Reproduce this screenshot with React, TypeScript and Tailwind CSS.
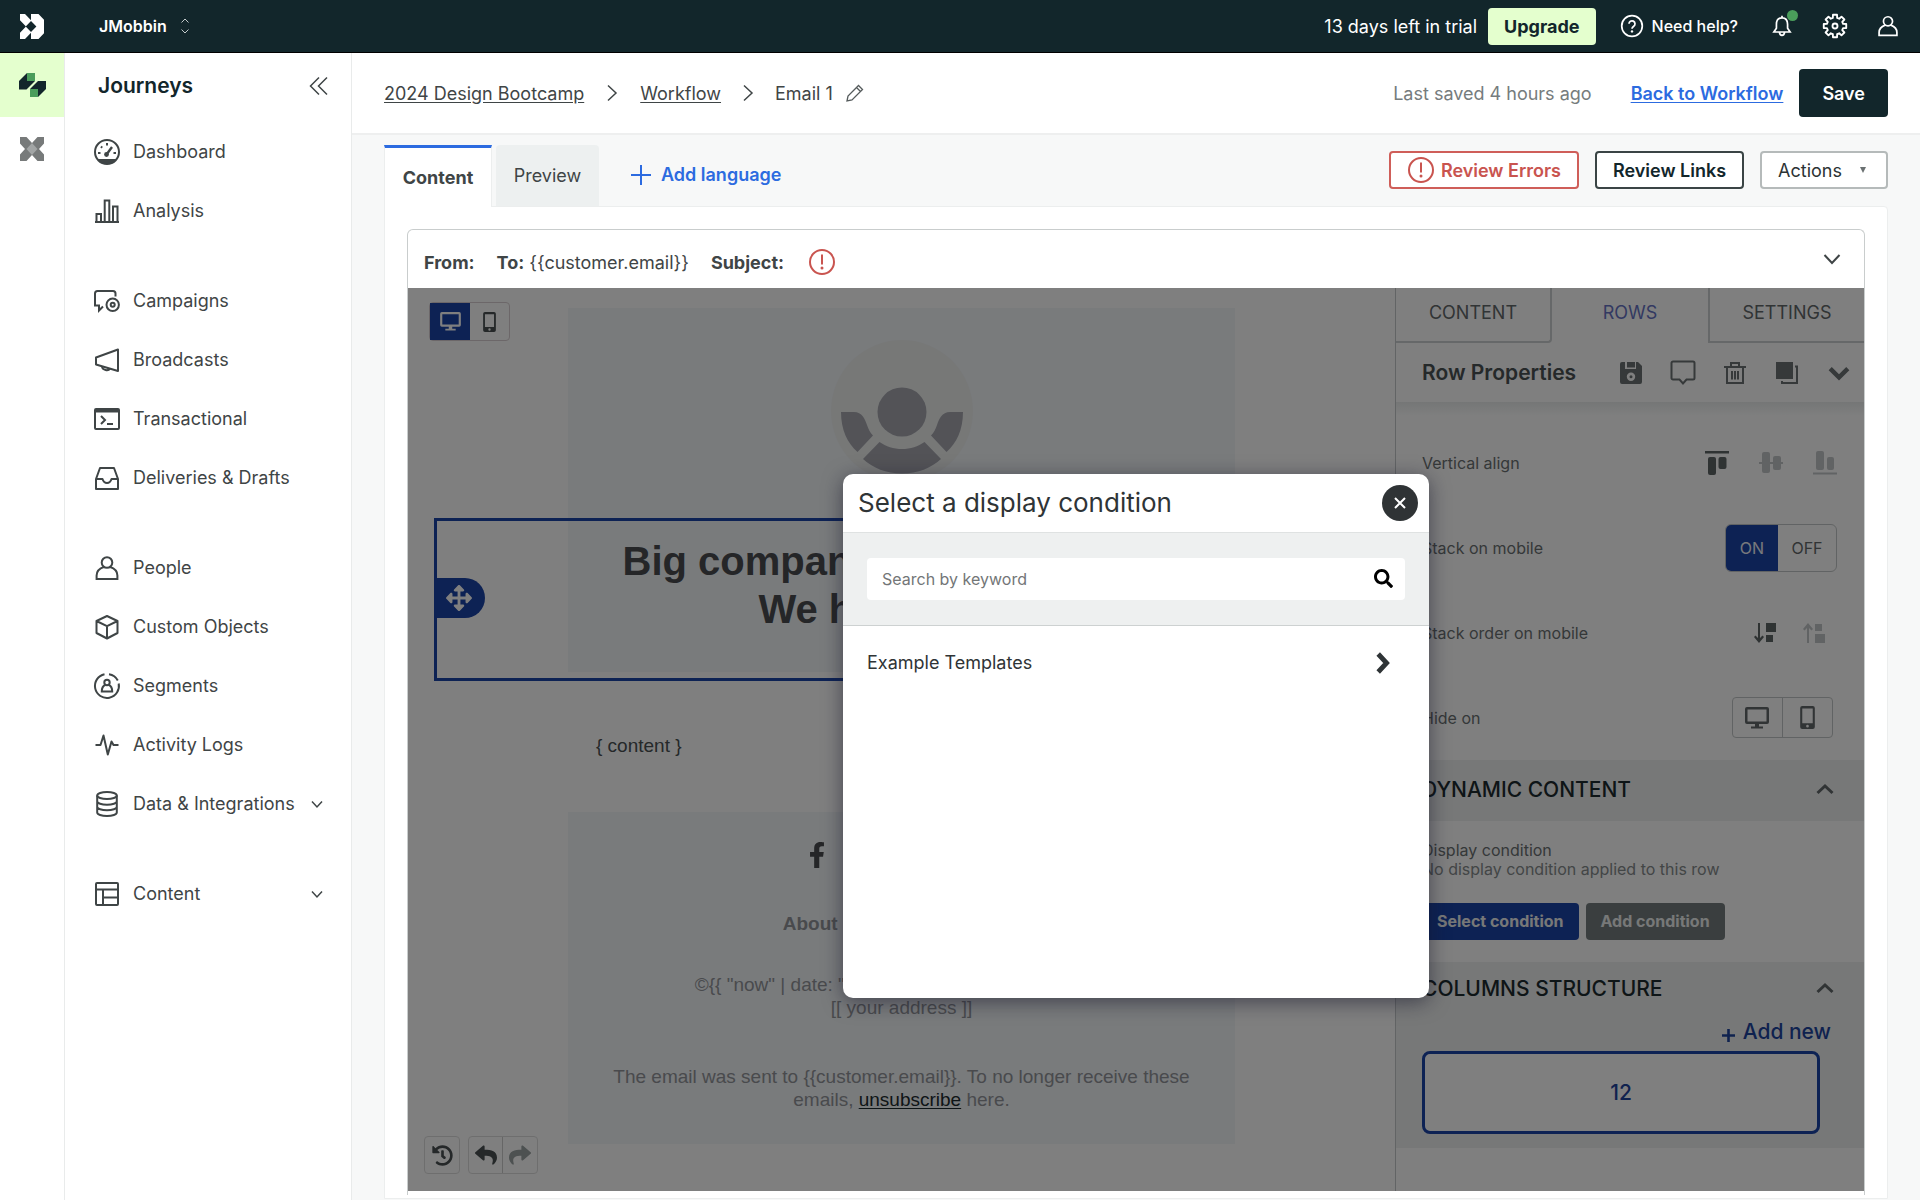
import React from "react";
import {
  FaArrowsAlt,
  FaFacebookF,
  FaHistory,
  FaReply,
  FaSearch,
  FaShare,
} from "react-icons/fa";

type IconProps = { children: React.ReactNode; className?: string };

// 28x28 outline icon shared by the navigation and the top bar
const Icon: React.FC<IconProps> = ({ children, className = "size-7" }) => (
  <svg
    viewBox="0 0 28 28"
    fill="none"
    stroke="currentColor"
    strokeWidth="2"
    className={`shrink-0 ${className}`}
    aria-hidden="true"
  >
    {children}
  </svg>
);

const personPath =
  "M14 3.2a5.3 5.3 0 1 1 0 10.6a5.3 5.3 0 0 1 0-10.6M10.6 13c-4 1.5-7 4.500-7 8.500v3.500h20.800v-3.500c0-4-3-7-7-8.500";

// eight teeth around the centre of the 28x28 box
const gearPoints = Array.from({ length: 8 })
  .flatMap((_, i) => {
    const a = (i * Math.PI) / 4;
    return [
      [9, a - 0.26],
      [12.3, a - 0.18],
      [12.3, a + 0.18],
      [9, a + 0.26],
    ];
  })
  .map(([r, a]) => `${(14 + r * Math.cos(a)).toFixed(2)},${(14 + r * Math.sin(a)).toFixed(2)}`)
  .join(" ");

const icons: Record<string, React.ReactNode> = {
  Dashboard: (
    <>
      <circle cx="14" cy="14" r="12" />
      <path d="M5 21.500h18l-3.500 3.500h-11z" fill="currentColor" strokeWidth="1" />
      <path d="M13.500 16.500L19 9" strokeWidth="2.400" />
      <circle cx="13.500" cy="16.500" r="2.400" fill="currentColor" stroke="none" />
      <path d="M14 5v2.500M8 8.500l1.200 1.200M5 15h2.500M20.500 15h2.500" />
    </>
  ),
  Analysis: (
    <>
      <path d="M2 25h24" />
      <path d="M3.500 25v-8h4.500v8M11.700 25v-21.500h4.600v21.500M20 25v-15.500h4.500v15.500" />
    </>
  ),
  Campaigns: (
    <>
      <path d="M22.500 9.500v-3a2.500 2.500 0 0 0-2.500-2.500h-15.500a2.500 2.500 0 0 0-2.500 2.500v12h4v5l4-4" />
      <circle cx="19.700" cy="17.800" r="6.200" />
      <circle cx="19.700" cy="17.800" r="2" />
    </>
  ),
  Broadcasts: (
    <>
      <path d="M25 3.500v21.500l-22-6.500v-7z" strokeLinejoin="round" />
      <path d="M9 20.500c.5 4 6.500 4.800 8 2" />
    </>
  ),
  Transactional: (
    <>
      <rect x="2" y="4" width="24" height="20" rx="1" />
      <path d="M2 6h24" strokeWidth="3" />
      <path d="M8 11l4 4-4 4M14 19h6" />
    </>
  ),
  "Deliveries & Drafts": (
    <path
      d="M3 15l4-11h14l4 11v10h-22zM3 15h6.500c.8 2.600 2.400 4 4.500 4s3.700-1.400 4.500-4h6.500"
      strokeLinejoin="round"
    />
  ),
  People: <path d={personPath} />,
  "Custom Objects": (
    <path
      d="M14 3l10.500 5v12l-10.500 5.500-10.500-5.500v-12zM3.500 8l10.500 5.200 10.500-5.200M14 13.200v12.300"
      strokeLinejoin="round"
    />
  ),
  Segments: (
    <>
      <path d="M11.500 2.200a12 12 0 1 0 14.200 9.300M16 2.200a12 12 0 0 1 8.800 6.300" />
      <circle cx="14" cy="10.500" r="2.700" />
      <path d="M12 13c-2 1-3.200 2.700-3.200 6.500h10.400c0-3.800-1.200-5.500-3.200-6.500" />
    </>
  ),
  "Activity Logs": (
    <path d="M2.500 14h5l3-9.500 4.300 19 3.700-13 2 3.500h5" strokeLinejoin="round" />
  ),
  "Data & Integrations": (
    <>
      <ellipse cx="14" cy="5.500" rx="9.800" ry="3.500" />
      <path d="M4.200 5.500v17c0 2 4.400 3.500 9.800 3.500s9.800-1.500 9.800-3.500v-17M4.200 11.200c0 2 4.400 3.500 9.800 3.500s9.800-1.500 9.800-3.500M4.200 16.800c0 2 4.400 3.500 9.800 3.500s9.800-1.500 9.800-3.500" />
    </>
  ),
  Content: (
    <>
      <rect x="3" y="3" width="22" height="22" rx="1" />
      <path d="M3 9.500h22M10 9.500v15.500M10 17.500h15" />
    </>
  ),
};

const navGroups = [
  ["Dashboard", "Analysis"],
  ["Campaigns", "Broadcasts", "Transactional", "Deliveries & Drafts"],
  ["People", "Custom Objects", "Segments", "Activity Logs", "Data & Integrations"],
  ["Content"],
];

const expandable = ["Data & Integrations", "Content"];

const Chevron: React.FC<{ className: string; d: string; width?: number }> = ({
  className,
  d,
  width = 2,
}) => (
  <svg
    viewBox="0 0 20 20"
    fill="none"
    stroke="currentColor"
    strokeWidth={width}
    className={`shrink-0 ${className}`}
    aria-hidden="true"
  >
    <path d={d} />
  </svg>
);

const ErrorIcon: React.FC<{ className?: string }> = ({ className = "" }) => (
  <Icon className={`size-7 text-[#c9544f] ${className}`}>
    <circle cx="14" cy="14" r="12" />
    <path d="M14 6.500v10" />
    <circle cx="14" cy="20" r="1.500" fill="currentColor" stroke="none" />
  </Icon>
);

const DesktopIcon: React.FC<{ className?: string }> = ({ className = "" }) => (
  <svg viewBox="0 0 24 22" fill="currentColor" className={className} aria-hidden="true">
    <path
      fillRule="evenodd"
      d="M2 0h20a2 2 0 0 1 2 2v13a2 2 0 0 1-2 2h-8v2.500h4v2h-12v-2h4v-2.500h-8a2 2 0 0 1-2-2v-13a2 2 0 0 1 2-2zM2.500 2.500v12h19v-12z"
    />
  </svg>
);

const MobileIcon: React.FC<{ className?: string }> = ({ className = "" }) => (
  <svg viewBox="0 0 14 22" fill="currentColor" className={className} aria-hidden="true">
    <path
      fillRule="evenodd"
      d="M2 0h10a2 2 0 0 1 2 2v18a2 2 0 0 1-2 2h-10a2 2 0 0 1-2-2v-18a2 2 0 0 1 2-2zM2 2.500v14h10v-14zM7 18a1.300 1.300 0 1 0 0 2.600a1.300 1.300 0 0 0 0-2.600z"
    />
  </svg>
);

const TopBar: React.FC = () => (
  <header className="flex h-[53px] items-center border-b border-black bg-[#12262b] text-white">
    <svg viewBox="0 0 24 25" className="ml-5 h-[25px] w-6" fill="#fff" aria-label="Home">
      <path d="M0 0h5l6 6.300v.8l-5.300 5.400 5.300 5.400v.8l-6 6.300h-5v-6.300l6-6.200-6-6.200z" />
      <path d="M11 0h7.500l5.500 5.800v13.400l-5.500 5.800h-7.500v-7.100l5.400-5.400-5.400-5.400z" />
    </svg>
    <button className="ml-[55px] flex items-center gap-[14px] text-[16px] font-semibold">
      JMobbin
      <svg viewBox="0 0 8 16" className="h-4 w-2" fill="none" stroke="#c4cbcc" aria-hidden="true">
        <path d="M.5 4.500L4 1l3.500 3.500M.5 11.500L4 15l3.500-3.500" />
      </svg>
    </button>
    <div className="ml-auto flex items-center pr-5">
      <span className="text-[18px]">13 days left in trial</span>
      <button className="ml-[11px] h-[37px] rounded bg-[#e4ffce] px-4 text-[18px] font-bold text-[#12262b]">
        Upgrade
      </button>
      <button className="ml-6 flex items-center gap-2 text-[16px] font-medium">
        <Icon className="size-6">
          <circle cx="14" cy="14" r="12" />
          <path d="M10.500 11.500a3.500 3.500 0 1 1 5.500 2.800c-1.300.9-2 1.500-2 2.900" />
          <circle cx="14" cy="20.300" r="1.400" fill="currentColor" stroke="none" />
        </Icon>
        Need help?
      </button>
      <button className="relative ml-8" aria-label="Notifications">
        <Icon className="size-6">
          <path d="M14 4.500c-4.500 0-6.500 3.300-6.500 7.500v4.500l-3 4.500h19l-3-4.500v-4.500c0-4.200-2-7.500-6.500-7.500zM14 2v2.500M11 21.500c.5 4.500 5.500 4.500 6 0" />
        </Icon>
        <span className="absolute -right-1 -top-1 size-[11px] rounded-full bg-[#4a9d5b]" />
      </button>
      <button className="ml-7" aria-label="Settings">
        <Icon className="size-[26px]">
          <polygon points={gearPoints} strokeLinejoin="round" />
          <circle cx="14" cy="14" r="2.700" />
        </Icon>
      </button>
      <button className="ml-7" aria-label="Account">
        <Icon className="size-6">
          <path d={personPath} />
        </Icon>
      </button>
    </div>
  </header>
);

const ProductRail: React.FC = () => (
  <aside className="w-[65px] shrink-0 border-r border-[#e9ebeb]">
    <a href="#journeys" aria-label="Journeys" className="flex h-16 items-center justify-center bg-[#e4ffce]">
      <svg viewBox="0 0 27 24" className="h-6 w-[27px]" aria-hidden="true">
        <path d="M8 0l-8 8v8.500h7.500l8.500-8.500v-8z" fill="#12262b" />
        <path d="M8 0h8v8h-8z" fill="#4a9d5b" />
        <path d="M19 8h8v8l-8 8h-8v-8z" fill="#12262b" />
        <path d="M11 16h8v8h-8z" fill="#4a9d5b" />
      </svg>
    </a>
    <a href="#pipelines" aria-label="Data Pipelines" className="flex h-16 items-center justify-center">
      <svg viewBox="0 0 24 24" className="size-6" aria-hidden="true">
        <path d="M0 0h6.500l5.500 6 5.500-6h6.500v6.500l-5 5.500 5 5.500v6.500h-6.500l-5.500-6-5.500 6h-6.500v-6.500l5-5.500-5-5.500z" fill="#777a7a" />
        <path d="M12 6l5.500 6-5.500 6-5.500-6z" fill="#a2a5a5" />
      </svg>
    </a>
  </aside>
);

const Sidebar: React.FC = () => (
  <nav className="w-[287px] shrink-0 border-r border-[#e9ebeb]">
    <div className="flex h-[69px] items-center justify-between pb-1 pl-[33px] pr-[22px]">
      <h2 className="text-[21px] font-semibold text-[#12262b]">Journeys</h2>
      <button aria-label="Collapse sidebar" className="text-[#3f4546]">
        <Chevron className="size-5" d="M10 1.500L1.500 10l8.500 8.500M18 1.500L9.500 10l8.500 8.500" width={1.5} />
      </button>
    </div>
    <div className="flex flex-col gap-[31px]">
      {navGroups.map((group) => (
        <ul key={group[0]}>
          {group.map((name) => (
            <li key={name}>
              <a href="#nav" className="flex h-[59px] items-center pl-7 pr-6 text-[18px] text-[#3f4546]">
                <Icon>{icons[name]}</Icon>
                <span className="ml-3">{name}</span>
                {expandable.includes(name) && (
                  <Chevron className="ml-auto size-5" d="M5 7.500l5 5.500 5-5.500" width={1.5} />
                )}
              </a>
            </li>
          ))}
        </ul>
      ))}
    </div>
  </nav>
);

const PageHeader: React.FC = () => (
  <div className="flex h-[82px] items-center border-b-2 border-[#eeefef] bg-white px-8 text-[18px] text-[#3f4546]">
    <a href="#campaign" className="underline underline-offset-2">
      2024 Design Bootcamp
    </a>
    <Chevron className="mx-[18px] size-5" d="M6 2.500l8 7.500-8 7.500" width={1.5} />
    <a href="#workflow" className="underline underline-offset-2">
      Workflow
    </a>
    <Chevron className="mx-[17px] size-5" d="M6 2.500l8 7.500-8 7.500" width={1.5} />
    <span>Email 1</span>
    <button aria-label="Rename" className="ml-3 text-[#555b5c]">
      <Chevron className="size-5" d="M2 18l1-5 10.500-10.500 4 4-10.500 10.500zM11.500 4.500l4 4" width={1.3} />
    </button>
    <span className="ml-auto text-[#767c7d]">Last saved 4 hours ago</span>
    <a href="#workflow" className="ml-[39px] font-semibold text-[#2c6be0] underline underline-offset-2">
      Back to Workflow
    </a>
    <button className="ml-4 h-12 rounded bg-[#12262b] px-[23px] font-semibold text-white">Save</button>
  </div>
);

const TabBar: React.FC = () => (
  <div className="flex h-[71px] items-end text-[18px]">
    <button className="relative z-10 -mb-px h-[62px] w-[108px] border-x border-t-[3px] border-x-[#eceeee] border-t-[#2c6be0] bg-white font-bold text-[#3f4546]">
      Content
    </button>
    <button className="ml-1 h-[61px] w-[103px] rounded-t bg-[#edf0f0] text-[#3f4546]">
      Preview
    </button>
    <button className="ml-8 flex h-[61px] items-center gap-[10px] pb-[2px] font-semibold text-[#2c6be0]">
      <Chevron className="size-5" d="M10 0v20M0 10h20" width={2} />
      Add language
    </button>
    <div className="ml-auto flex gap-4 pb-[17px]">
      <button className="flex h-[38px] items-center gap-[6px] rounded border-2 border-[#cf5e59] bg-white px-4 font-semibold text-[#c9544f]">
        <ErrorIcon />
        Review Errors
      </button>
      <button className="h-[38px] rounded border-2 border-[#3a4445] bg-white px-4 font-semibold text-[#12262b]">
        Review Links
      </button>
      <button
        aria-haspopup="menu"
        className="flex h-[38px] items-center gap-[14px] rounded border-2 border-[#b5baba] bg-white px-4 text-[#2c3334]"
      >
        Actions
        <svg viewBox="0 0 6 6" className="mx-1 size-[6px]" fill="#6a7071" aria-hidden="true">
          <path d="M0 0h6l-3 6z" />
        </svg>
      </button>
    </div>
  </div>
);

// the picture placeholder at the top of the email
const AvatarPlaceholder: React.FC = () => (
  <svg viewBox="0 0 146 146" className="mx-auto size-[146px]" aria-hidden="true">
    <circle cx="73" cy="73" r="71" fill="#eef0ef" />
    <g fill="#a6a7af">
      <circle cx="73" cy="74" r="24.500" />
      <path d="M12 74h13c8 0 11 7 13 13 1.500 4 3 7.500 6 10.500l-15.500 16.500c-10-9-16.500-22-16.500-40z" />
      <path d="M134 74h-13c-8 0-11 7-13 13-1.500 4-3 7.500-6 10.500l15.500 16.500c10-9 16.500-22 16.500-40z" />
      <path d="M50.500 104c6.500 4.500 14 7 22.500 7s16-2.500 22.500-7l16.500 17c-10 9-23 14.500-39 14.500s-29-5.500-39-14.500z" />
    </g>
  </svg>
);

const EmailCanvas: React.FC = () => (
  <section className="relative flex grow flex-col bg-white pb-[47px] pt-5 font-['Liberation_Sans',Arial,sans-serif]">
    <div className="mx-auto h-[210px] w-[667px] bg-[#f2f6f9] pt-[30px]">
      <AvatarPlaceholder />
    </div>
    <div className="relative mx-[26px]">
      <div className="mx-auto w-[667px] bg-[#f2f6f9] pb-[39px] pt-[19px]">
        <h1 className="text-center text-[40px] font-bold leading-[48px] text-[#4a4c50]">
          Big companies are confusing
          <br />
          We have ideas.
        </h1>
      </div>
      <div className="absolute inset-x-0 -bottom-[9px] top-0 flex items-center border-[3px] border-[#1b44a8] pb-1">
        <span className="flex h-10 w-12 items-center rounded-r-full bg-[#1b44a8] pl-[9px] text-white">
          <FaArrowsAlt size={26} />
        </span>
      </div>
    </div>
    <div className="mx-auto flex h-[140px] w-[667px] items-center pl-7 pt-2 text-[19px] text-[#4a5153]">
      {"{ content }"}
    </div>
    <div className="mx-auto w-[667px] grow bg-[#f2f6f9] text-center text-[19px] leading-[23px] text-[#92959a]">
      <div className="flex justify-center pl-[40px] pr-[210px] pt-[30px] text-[#4a4c50]">
        <FaFacebookF size={26} />
      </div>
      <p className="mt-[44px] font-bold">About | Contact us | Blogs</p>
      <p className="mt-[38px]">{'©{{ "now" | date: "%Y" }} [[ your company name ]]'}</p>
      <p>{"[[ your address ]]"}</p>
      <p className="mt-[46px]">
        {"The email was sent to {{customer.email}}. To no longer receive these"}
      </p>
      <p>
        emails,{" "}
        <a href="#unsubscribe" className="text-[#1c2b2f] underline underline-offset-2">
          unsubscribe
        </a>{" "}
        here.
      </p>
    </div>
    <div className="absolute left-[21px] top-[14px] flex rounded-sm border border-[#d8cfd2]">
      <button aria-label="Desktop view" className="flex h-[37px] w-10 items-center justify-center bg-[#1b44a8] text-white">
        <DesktopIcon className="h-[19px] w-[21px]" />
      </button>
      <button aria-label="Mobile view" className="flex h-[37px] w-[39px] items-center justify-center text-[#4a5153]">
        <MobileIcon className="h-5 w-[13px]" />
      </button>
    </div>
    <div className="absolute bottom-[17px] left-4 flex gap-2 text-[#4a5153]">
      <button aria-label="History" className="flex h-[38px] w-9 items-center justify-center rounded border border-[#ddd]">
        <FaHistory size={21} />
      </button>
      <div className="flex rounded border border-[#ddd]">
        <button aria-label="Undo" className="flex h-9 w-[34px] items-center justify-center border-r border-[#ccc]">
          <FaReply size={22} />
        </button>
        <button aria-label="Redo" className="flex h-9 w-[34px] items-center justify-center text-[#9aa2a2]">
          <FaShare size={22} />
        </button>
      </div>
    </div>
  </section>
);

const PanelRow: React.FC<{ label: string; children: React.ReactNode }> = ({ label, children }) => (
  <div className="flex h-[85px] items-center justify-between text-[16px] text-[#6b7172]">
    <span>{label}</span>
    {children}
  </div>
);

const PropertiesPanel: React.FC = () => (
  <section className="flex w-[469px] shrink-0 flex-col border-l border-[#c4c9ca] bg-white">
    <div className="grid grid-cols-3 text-[18px] text-[#62686a]">
      <button className="h-[55px] rounded-br border-b-2 border-r-2 border-[#cdd1d2] pb-1">CONTENT</button>
      <button className="h-[55px] pb-[6px] text-[#6673c4]">ROWS</button>
      <button className="h-[55px] border-b-2 border-l-2 border-[#cdd1d2] pb-1">SETTINGS</button>
    </div>
    <div className="flex h-[59px] items-center pl-[26px] pr-[14px] text-[#6d7374]">
      <h3 className="mr-auto text-[21px] font-semibold text-[#4b5254]">Row Properties</h3>
      <div className="flex items-center gap-[30px]">
        <svg viewBox="0 0 22 22" className="size-[22px]" fill="currentColor" aria-label="Save row">
          <path
            fillRule="evenodd"
            d="M2 0h3v7h11v-7h2l4 4v16a2 2 0 0 1-2 2h-18a2 2 0 0 1-2-2v-18a2 2 0 0 1 2-2zM11 10.500a4.200 4.200 0 1 0 0 8.400a4.200 4.200 0 0 0 0-8.400zM11 13.200a1.500 1.500 0 1 1 0 3a1.500 1.500 0 0 1 0-3z"
          />
          <path d="M7 0h8v5.500h-8z" />
        </svg>
        <svg viewBox="0 0 22 22" className="size-[22px] overflow-visible" fill="none" stroke="currentColor" strokeWidth="2" aria-label="Comment">
          <path d="M1-.5h20a1.500 1.500 0 0 1 1.500 1.500v15a1.500 1.500 0 0 1-1.500 1.500h-6.500l-3.500 4-3.500-4h-6.500a1.500 1.500 0 0 1-1.500-1.500v-15a1.500 1.500 0 0 1 1.500-1.500z" />
        </svg>
        <svg viewBox="0 0 22 22" className="size-[22px]" fill="none" stroke="currentColor" strokeWidth="2" aria-label="Delete">
          <path d="M0 5h22M7 4.500v-3.500h8v3.500M3 5v16h16v-16M8 9v8.500M11 9v8.500M14 9v8.500" />
        </svg>
        <svg viewBox="0 0 22 22" className="size-[22px]" fill="none" stroke="currentColor" strokeWidth="2" aria-label="Duplicate">
          <path d="M0 0h17v17h-17z" fill="currentColor" stroke="none" />
          <path d="M19 4.500h2v16.500h-15v-2" />
        </svg>
        <Chevron className="size-[22px]" d="M2 6l8 8 8-8" width={4} />
      </div>
    </div>
    <div className="h-[14px] bg-gradient-to-b from-[#eaeded] to-white" />
    <div className="pl-[26px] pr-[27px] pt-1">
      <PanelRow label="Vertical align">
        <div className="flex gap-[30px]">
          <svg viewBox="0 0 24 24" className="size-6" fill="#5f6667" aria-label="Top">
            <path d="M0 0h24v2.500h-24z" />
            <rect x="3" y="6" width="8" height="18" rx="2" />
            <rect x="13.500" y="6" width="8" height="12" rx="2" />
          </svg>
          <svg viewBox="0 0 24 24" className="size-6" fill="#c3c7c8" aria-label="Middle">
            <path d="M0 11h24v2h-24z" />
            <rect x="3" y="1" width="8" height="21" rx="2" />
            <rect x="14" y="5" width="8" height="14" rx="2" />
          </svg>
          <svg viewBox="0 0 24 24" className="size-6" fill="#c3c7c8" aria-label="Bottom">
            <path d="M0 21.500h24v2h-24z" />
            <rect x="3" y="0" width="8" height="19" rx="2" />
            <rect x="14" y="6" width="7" height="13" rx="2" />
          </svg>
        </div>
      </PanelRow>
      <PanelRow label="Stack on mobile">
        <div className="flex h-12 w-28 overflow-hidden rounded-md border border-[#c3c7c8]">
          <button className="w-[52px] bg-[#1b44a8] text-[#f0f2f8]">ON</button>
          <button className="grow text-[#62686a]">OFF</button>
        </div>
      </PanelRow>
      <PanelRow label="Stack order on mobile">
        <div className="flex gap-[27px] pr-3">
          <svg viewBox="0 0 22 20" className="h-5 w-[22px]" fill="#5f6667" aria-label="Default order">
            <path d="M4 0h2v15l2.500-2.500 1.500 1.500-5 6-5-6 1.500-1.500 2.500 2.500z" />
            <path d="M12 0h10v9h-10zM12 12h7v7h-7z" />
          </svg>
          <svg viewBox="0 0 22 20" className="h-5 w-[22px]" fill="#c3c7c8" aria-label="Reverse order">
            <path d="M4 20h2v-15l2.500 2.500 1.500-1.500-5-6-5 6 1.500 1.500 2.500-2.500z" />
            <path d="M12 11h10v9h-10zM12 1h7v7h-7z" />
          </svg>
        </div>
      </PanelRow>
      <PanelRow label="Hide on">
        <div className="mr-1 flex h-[41px] w-[101px] rounded border border-[#c3c7c8] text-[#62686a]">
          <button aria-label="Hide on desktop" className="flex w-1/2 items-center justify-center border-r border-[#c3c7c8]">
            <DesktopIcon className="h-[22px] w-6" />
          </button>
          <button aria-label="Hide on mobile" className="flex w-1/2 items-center justify-center">
            <MobileIcon className="h-[23px] w-[15px]" />
          </button>
        </div>
      </PanelRow>
    </div>
    <div className="flex h-[61px] items-center justify-between bg-[#eef1f1] pb-[2px] pl-[26px] pr-[29px]">
      <h3 className="text-[21px] font-medium text-[#1c2b2f]">DYNAMIC CONTENT</h3>
      <Chevron className="size-5 text-[#62686a]" d="M2.500 13l7.500-7 7.500 7" width={3} />
    </div>
    <div className="h-[141px] pl-[26px] pt-5 text-[16px] leading-[19px]">
      <p className="text-[#6b7172]">Display condition</p>
      <p className="text-[#868c8d]">No display condition applied to this row</p>
      <div className="mt-6 flex gap-[7px] font-bold text-[#eef1f1]">
        <button className="h-[37px] rounded bg-[#1b44a8] px-[15px]">Select condition</button>
        <button className="h-[37px] rounded bg-[#747d7e] px-[15px]">Add condition</button>
      </div>
    </div>
    <div className="bg-[#eef1f1] pb-[14px] pl-[26px]">
      <div className="flex h-[54px] items-center justify-between pr-[29px]">
        <h3 className="text-[21px] font-medium text-[#1c2b2f]">COLUMNS STRUCTURE</h3>
        <Chevron className="size-5 text-[#62686a]" d="M2.500 13l7.500-7 7.500 7" width={3} />
      </div>
      <button className="ml-auto mr-[33px] flex h-[35px] items-center gap-2 pb-1 text-[21px] font-medium text-[#1f459f]">
        <Chevron className="mt-2 size-[13px]" d="M10 0v20M0 10h20" width={4} />
        Add new
      </button>
      <button className="mr-[43px] flex h-[83px] w-[398px] items-center justify-center rounded-lg border-[3px] border-[#1b44a8] bg-white text-[21px] font-medium text-[#1f459f]">
        12
      </button>
    </div>
  </section>
);

const ConditionDialog: React.FC = () => (
  <div
    role="dialog"
    aria-labelledby="dialog-title"
    className="h-[524px] w-[586px] rounded-[10px] bg-white shadow-[0_4px_20px_rgba(20,20,40,0.55)]"
  >
    <div className="flex h-[59px] items-center justify-between border-b border-[#dfe2e2] pl-[15px] pr-[11px]">
      <h2 id="dialog-title" className="text-[26px] text-[#2f3436]">
        Select a display condition
      </h2>
      <button aria-label="Close" className="flex size-9 items-center justify-center rounded-full bg-[#2f3335] text-white">
        <Chevron className="size-5" d="M5 5l10 10M15 5l-10 10" width={2} />
      </button>
    </div>
    <div className="border-b border-[#cdd1d1] bg-[#eef0f0] px-6 py-[25px]">
      <label className="flex h-[42px] items-center rounded bg-white pl-[15px] pr-3">
        <span className="sr-only">Search by keyword</span>
        <input
          type="text"
          placeholder="Search by keyword"
          className="grow text-[16px] outline-none placeholder:text-[#737677]"
        />
        <FaSearch size={19} className="text-black" />
      </label>
    </div>
    <button className="flex h-[74px] w-full items-center justify-between pl-6 pr-[34px] text-[18px] text-[#2f3436]">
      Example Templates
      <Chevron className="size-6" d="M6 2.500l7 7.500-7 7.500" width={4} />
    </button>
  </div>
);

const App: React.FC = () => {
  return (
    <div className="flex min-h-screen flex-col bg-white font-['Inter',sans-serif]">
      <TopBar />
      <div className="flex grow">
        <ProductRail />
        <Sidebar />
        <main className="flex min-w-0 grow flex-col bg-[#f7f8f8]">
          <PageHeader />
          <div className="flex grow flex-col px-8 pb-px">
            <TabBar />
            <div className="grow rounded-tr border border-[#eceeee] bg-white px-[22px] pt-[22px]">
              <div className="rounded-t-md border border-b-0 border-[#c9cdcd] pb-1">
                <div className="flex h-[58px] items-center pl-4 pr-[22px] pt-[6px] text-[18px] text-[#3f4546]">
                  <strong className="font-bold">From:</strong>
                  <strong className="ml-[22px] font-bold">To:</strong>
                  <span className="ml-[5px]">{"{{customer.email}}"}</span>
                  <strong className="ml-[22px] font-bold">Subject:</strong>
                  <ErrorIcon className="ml-6" />
                  <button aria-label="Show envelope" className="ml-auto pb-[6px]">
                    <Chevron className="size-5" d="M2.500 6l7.500 8 7.500-8" width={2} />
                  </button>
                </div>
                <div className="relative flex h-[903px]">
                  <EmailCanvas />
                  <PropertiesPanel />
                  <div className="absolute inset-0 z-20 flex items-center justify-center bg-black/50 pb-2">
                    <ConditionDialog />
                  </div>
                </div>
              </div>
            </div>
          </div>
        </main>
      </div>
    </div>
  );
};

export default App;
